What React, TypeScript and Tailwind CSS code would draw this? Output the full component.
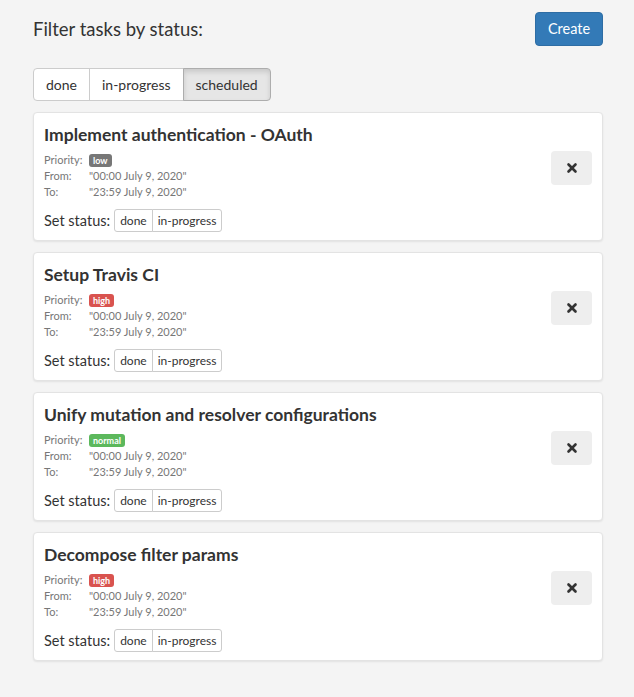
import { X } from "lucide-react";

const tasks = [
  { title: "Implement authentication - OAuth", priority: "low" },
  { title: "Setup Travis CI", priority: "high" },
  { title: "Unify mutation and resolver configurations", priority: "normal" },
  { title: "Decompose filter params", priority: "high" },
];

const badgeColor: Record<string, string> = {
  low: "bg-[#777777]",
  high: "bg-[#d9534f]",
  normal: "bg-[#5cb85c]",
};

export default function App() {
  return (
    <div
      className="min-h-screen bg-[#f4f4f4] text-[#333333]"
      style={{ fontFamily: "Lato, 'Open Sans', sans-serif" }}
    >
      <div className="ml-[33px] w-[570px] pt-[12px]">
        {/* Header */}
        <div className="flex items-center justify-between">
          <h1 className="text-[18.5px] leading-[34px]">Filter tasks by status:</h1>
          <button className="h-[34px] w-[68px] rounded-[4px] border border-[#2e6da4] bg-[#337ab7] text-[14.5px] text-white">
            Create
          </button>
        </div>

        {/* Filter */}
        <div className="mt-[22px] flex h-[33px] w-fit text-[14px]">
          <button className="rounded-l-[4px] border border-[#cccccc] bg-white px-[12px]">
            done
          </button>
          <button className="-ml-px border border-[#cccccc] bg-white px-[12px]">
            in-progress
          </button>
          <button className="-ml-px rounded-r-[4px] border border-[#adadad] bg-[#e6e6e6] px-[12px] shadow-[inset_0_3px_5px_rgba(0,0,0,0.125)]">
            scheduled
          </button>
        </div>

        {/* Tasks */}
        <div className="mt-[11px] flex flex-col gap-[11px] pb-[35px]">
          {tasks.map((t, i) => (
            <div
              key={i}
              className="flex h-[129px] justify-between rounded-[4px] border border-[#e3e3e3] bg-white pl-[10px] pr-[10px] pt-[10px] shadow-[0_1px_2px_rgba(0,0,0,0.08)]"
            >
              <div>
                <h2 className="text-[17.5px] font-bold leading-[24px]">{t.title}</h2>
                <div className="mt-[5px] text-[11px] leading-[16px] text-[#777777]">
                  <div className="flex items-center">
                    <span className="w-[45px]">Priority:</span>
                    <span
                      className={`rounded-[3px] px-[4px] text-[9px] font-bold leading-[13px] text-white ${badgeColor[t.priority]}`}
                    >
                      {t.priority}
                    </span>
                  </div>
                  <div className="flex">
                    <span className="w-[45px]">From:</span>
                    <span>"00:00 July 9, 2020"</span>
                  </div>
                  <div className="flex">
                    <span className="w-[45px]">To:</span>
                    <span>"23:59 July 9, 2020"</span>
                  </div>
                </div>
                <div className="mt-[9px] flex items-center">
                  <span className="mr-[4px] text-[14.5px]">Set status:</span>
                  <div className="flex h-[23px] text-[12px]">
                    <button className="rounded-l-[3px] border border-[#cccccc] bg-white px-[5px]">
                      done
                    </button>
                    <button className="-ml-px rounded-r-[3px] border border-[#cccccc] bg-white px-[5px]">
                      in-progress
                    </button>
                  </div>
                </div>
              </div>
              <div className="pt-[28px]">
                <button className="flex h-[34px] w-[41px] items-center justify-center rounded-[4px] bg-[#eeeeee]">
                  <X className="h-[14px] w-[14px] text-[#333333]" strokeWidth={4.5} />
                </button>
              </div>
            </div>
          ))}
        </div>
      </div>
    </div>
  );
}
